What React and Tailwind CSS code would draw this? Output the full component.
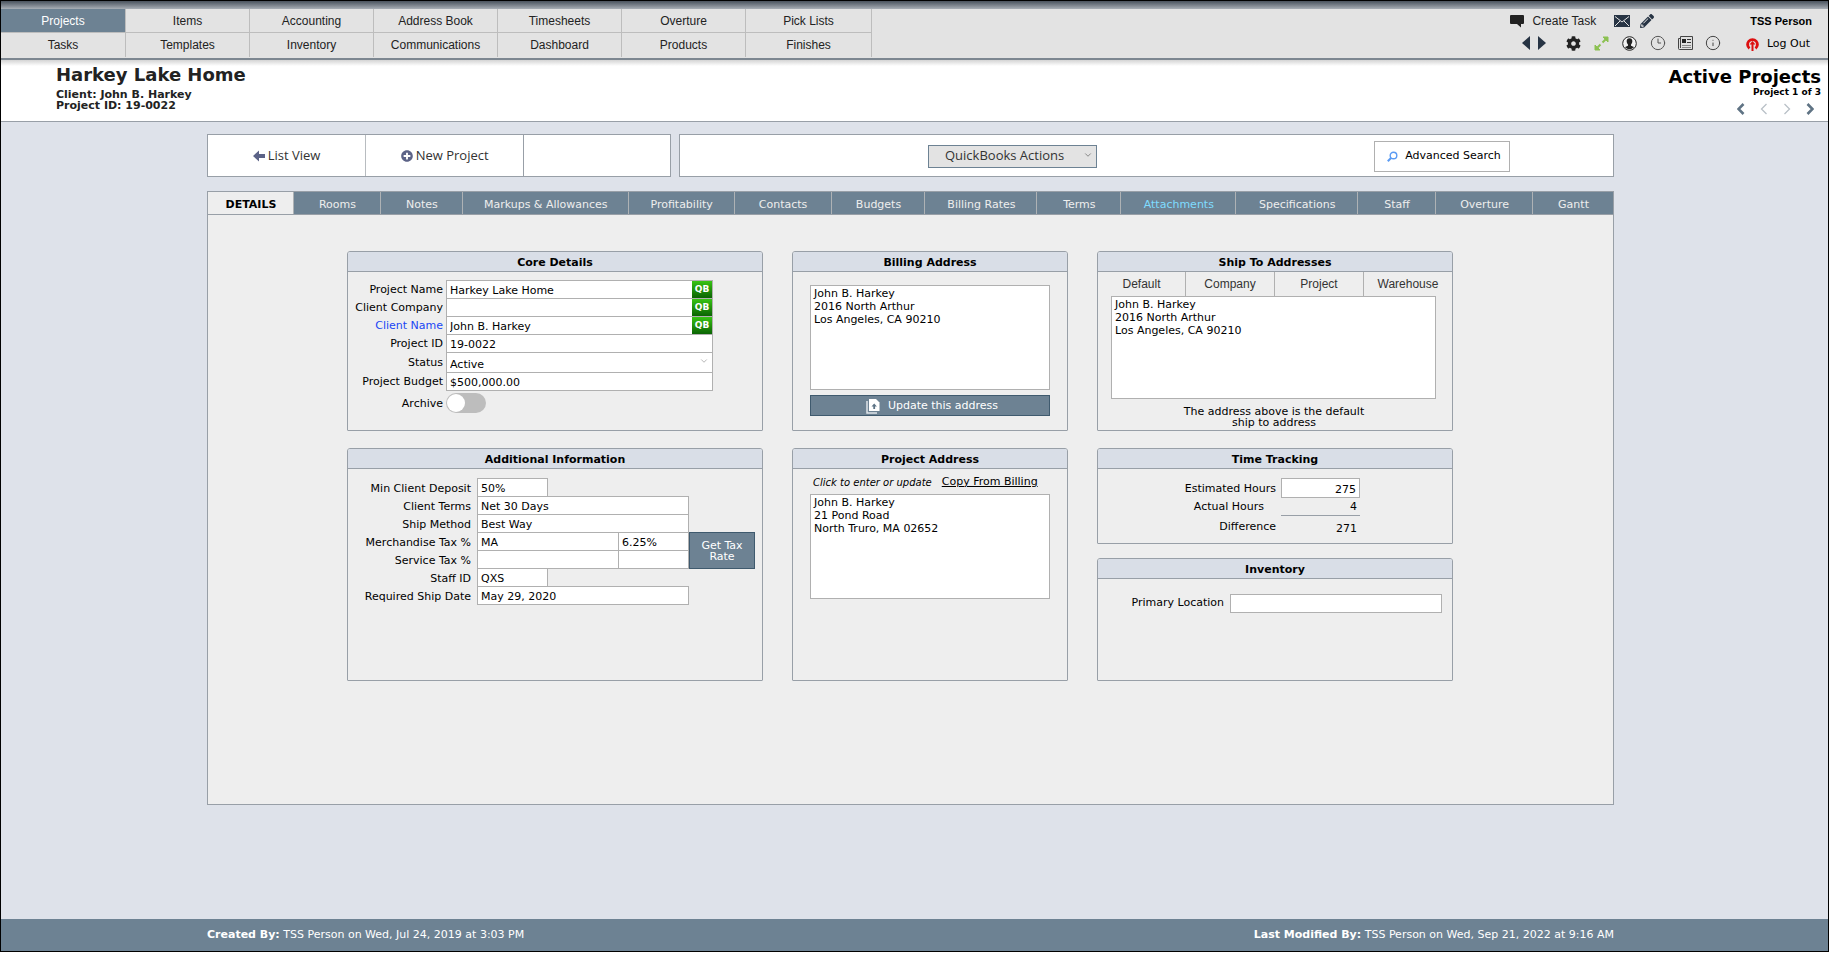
import { ChevronDown, Clock3, Info } from 'lucide-react';
import React, { useState } from 'react';
import { FaCog, FaPencilAlt, FaPlusCircle } from 'react-icons/fa';

const NAV_ROWS = [
  ['Projects', 'Items', 'Accounting', 'Address Book', 'Timesheets', 'Overture', 'Pick Lists'],
  ['Tasks', 'Templates', 'Inventory', 'Communications', 'Dashboard', 'Products', 'Finishes'],
];

const TABS = [
  'DETAILS',
  'Rooms',
  'Notes',
  'Markups & Allowances',
  'Profitability',
  'Contacts',
  'Budgets',
  'Billing Rates',
  'Terms',
  'Attachments',
  'Specifications',
  'Staff',
  'Overture',
  'Gantt',
];

const BILLING = 'John B. Harkey\n2016 North Arthur\nLos Angeles, CA 90210';
const PROJECT = 'John B. Harkey\n21 Pond Road\nNorth Truro, MA 02652';

const inputClass = 'h-[19px] min-w-0 border border-[#b0b0b0] bg-white px-[3px] pt-px text-[11px] outline-none';

function SpeechIcon() {
  return (
    <svg width="14" height="14" viewBox="0 0 14 14" fill="#222">
      <path d="M1 1h12q1 0 1 1v7q0 1-1 1h-2v3.500L7 10H1q-1 0-1-1V2q0-1 1-1z" />
    </svg>
  );
}

function MailIcon() {
  return (
    <svg width="16" height="12" viewBox="0 0 16 12">
      <rect width="16" height="12" fill="#273444" />
      <path d="M1 1.500l7 5.500 7-5.500M1 11l5-5M15 11l-5-5" fill="none" stroke="#e3e3e3" />
    </svg>
  );
}

function TriangleIcon({ right }) {
  return (
    <svg width="8" height="14" viewBox="0 0 8 14" fill="#273444">
      <path d={right ? 'M0 0v14l8-7z' : 'M8 0v14L0 7z'} />
    </svg>
  );
}

function ExpandIcon() {
  return (
    <svg width="15" height="15" viewBox="0 0 15 15" fill="none" stroke="#8cc152" strokeWidth="2">
      <path d="M9 1h5v5z" fill="#8cc152" strokeWidth="1" />
      <path d="M1 9v5h5z" fill="#8cc152" strokeWidth="1" />
      <path d="M12 3L8.500 6.500M3 12l3.500-3.500" />
    </svg>
  );
}

function PersonIcon() {
  return (
    <svg width="15" height="15" viewBox="0 0 15 15">
      <circle cx="7.500" cy="7.500" r="6.800" fill="#f2f2f2" stroke="#222" />
      <path
        d="M7.500 2.200c-2 0-3 1.400-2.800 3.300.1 1.400.7 2.300 1.300 3v1.200c-1 .5-2.300.8-3 1.600a6.400 6.400 0 0 0 9 0c-.7-.8-2-1.100-3-1.600V8.500c.6-.7 1.200-1.600 1.300-3 .2-1.900-.8-3.300-2.800-3.300z"
        fill="#222"
      />
    </svg>
  );
}

function NewsIcon() {
  return (
    <svg width="15" height="14" viewBox="0 0 15 14">
      <path d="M2.500.500h12v13h-13q-1 0-1-1v-10h2z" fill="#e0e0e0" stroke="#444" />
      <path d="M2.500 2v10" stroke="#444" />
      <rect x="4" y="3" width="4" height="4" fill="#222" />
      <path d="M9 3.500h4M9 6.500h4" stroke="#333" />
      <path d="M4 9.500h9M4 11.500h9" stroke="#888" />
    </svg>
  );
}

function LogOutIcon() {
  return (
    <svg width="13" height="13" viewBox="0 0 13 13">
      <path d="M3.500 10.300A4.900 4.900 0 1 1 9.500 10.300" fill="none" stroke="#dd1010" strokeWidth="2.800" />
      <path d="M6.500 3L3.500 6.500h2V13h2V6.500h2z" fill="#dd1010" />
    </svg>
  );
}

function SearchIcon() {
  return (
    <svg width="11" height="11" viewBox="0 0 11 11" fill="none" stroke="#5b9bf3">
      <circle cx="6.500" cy="4.500" r="3.300" strokeWidth="1.400" />
      <path d="M4 7L.8 10.200" strokeWidth="2" />
    </svg>
  );
}

function BackArrowIcon() {
  return (
    <svg width="12" height="12" viewBox="0 0 12 12" fill="#5c6387">
      <path d="M6 .5v3.500h6v4H6v3.500L0 6z" />
    </svg>
  );
}

function PagerIcon({ right, light }) {
  return (
    <svg
      width="8"
      height="12"
      viewBox="0 0 8 12"
      fill="none"
      stroke={light ? '#b9c0c7' : '#5f7384'}
      strokeWidth={light ? 1.3 : 2.6}
    >
      <path d={right ? 'M1.500 1l5 5-5 5' : 'M6.500 1l-5 5 5 5'} />
    </svg>
  );
}

function CopyUpIcon() {
  return (
    <svg width="14" height="15" viewBox="0 0 14 15">
      <path d="M1 2v12h10" fill="none" stroke="#dfe5ea" strokeWidth="1.500" />
      <path d="M3 0h7l3.500 3.500V12H3z" fill="#fff" />
      <path d="M8.200 4.500L5.500 7.500h1.800V10h1.800V7.500h1.800z" fill="#5d7385" />
    </svg>
  );
}

function Panel({ title, className = '', children }) {
  return (
    <section className={`flex flex-col rounded-t-[3px] rounded-b-[1px] border border-[#989fa7] ${className}`}>
      <h2 className="h-5 rounded-t-[2px] border-b border-[#989fa7] bg-[#d9dee7] text-center text-[11px] leading-[21px] font-bold">
        {title}
      </h2>
      {children}
    </section>
  );
}

function CoreRow({ id, label, value, qb, link, tall }) {
  return (
    <div className={`flex items-center ${tall ? 'h-5' : 'h-[18px]'}`}>
      <label htmlFor={id} className={`w-[98px] pt-[3px] pr-[3px] text-right ${link ? 'text-[#1a46f5]' : ''}`}>
        {label}
      </label>
      {tall ? (
        <div className="relative flex w-[267px]">
          <select
            id={id}
            defaultValue={value}
            className="h-[21px] w-full appearance-none border border-[#b0b0b0] bg-white px-[3px] pt-1 text-[11px] outline-none"
          >
            <option>{value}</option>
          </select>
          <ChevronDown size={10} className="pointer-events-none absolute top-[4px] right-1 text-[#a8a8a8]" />
        </div>
      ) : (
        <div className="flex h-[19px] w-[267px] border border-[#b0b0b0] bg-white">
          <input id={id} defaultValue={value} className="min-w-0 flex-1 px-[3px] pt-1 text-[11px] outline-none" />
          {qb && (
            <button
              type="button"
              className="w-5 bg-linear-to-b from-[#37c514] to-[#0a6404] text-[9px] leading-[17px] font-bold text-white"
            >
              QB
            </button>
          )}
        </div>
      )}
    </div>
  );
}

function InfoLabel({ htmlFor, children }) {
  return (
    <label htmlFor={htmlFor} className="col-start-1 pr-[6px] text-right leading-[22px]">
      {children}
    </label>
  );
}

function AddressBox({ label, value, className = '' }) {
  return (
    <textarea
      aria-label={label}
      defaultValue={value}
      className={`block resize-none border border-[#b0b0b0] bg-white px-[3px] py-px text-[11px] leading-[13px] outline-none ${className}`}
    />
  );
}

function TopBar() {
  return (
    <header className="border-b-2 border-[#7d8791] bg-[#e3e3e3] font-['Liberation_Sans',sans-serif] text-xs text-[#222]">
      <div className="h-2 bg-linear-to-b from-[#4a535e] to-[#a9afb6]" />
      <div className="flex h-[49px] justify-between">
        <nav className="w-[871px]">
          {NAV_ROWS.map((row, rowIndex) => (
            <div
              key={row[0]}
              className={`grid grid-cols-[125fr_repeat(5,124fr)_126fr] ${rowIndex === 0 ? 'border-b border-[#bdbdbd]' : ''}`}
            >
              {row.map((item) => (
                <a
                  key={item}
                  href="#"
                  className={`border-r border-[#bdbdbd] text-center ${rowIndex === 0 ? 'h-[23px] leading-6' : 'h-6 leading-6'} ${
                    item === 'Projects' ? 'bg-[#6d8293] text-white' : ''
                  }`}
                >
                  {item}
                </a>
              ))}
            </div>
          ))}
        </nav>
        <div className="flex flex-col pr-4">
          <div className="flex h-6 items-center">
            <button type="button" className="flex items-center gap-2">
              <SpeechIcon />
              Create Task
            </button>
            <button type="button" aria-label="Mail" className="ml-[18px]">
              <MailIcon />
            </button>
            <button type="button" aria-label="Edit" className="ml-[10px]">
              <FaPencilAlt size={14} color="#273444" />
            </button>
            <span className="ml-auto pl-[96px] text-[11px] font-bold text-black">TSS Person</span>
          </div>
          <div className="flex h-5 items-center pl-3">
            <button type="button" aria-label="Back">
              <TriangleIcon />
            </button>
            <button type="button" aria-label="Forward" className="ml-2">
              <TriangleIcon right />
            </button>
            <button type="button" aria-label="Settings" className="ml-5">
              <FaCog size={15} color="#222" />
            </button>
            <button type="button" aria-label="Expand" className="ml-[13px]">
              <ExpandIcon />
            </button>
            <button type="button" aria-label="Profile" className="ml-[13px]">
              <PersonIcon />
            </button>
            <button type="button" aria-label="History" className="ml-[13px]">
              <Clock3 size={16} strokeWidth={1.5} color="#555" />
            </button>
            <button type="button" aria-label="News" className="ml-3">
              <NewsIcon />
            </button>
            <button type="button" aria-label="About" className="ml-3">
              <Info size={16} strokeWidth={1.5} color="#444" />
            </button>
            <a
              href="#"
              className="ml-auto flex items-center gap-2 pt-[3px] pr-[2px] font-['DejaVu_Sans',sans-serif] text-[11px] text-black"
            >
              <LogOutIcon />
              Log Out
            </a>
          </div>
        </div>
      </div>
    </header>
  );
}

function TitleBar() {
  return (
    <div className="flex h-[62px] justify-between border-b border-[#989fa7] bg-linear-to-b from-[#d4d4d4] to-white to-[6px] pr-[7px] pl-[55px] font-bold">
      <div className="pt-1 text-[#222]">
        <h1 className="text-lg leading-[21px]">Harkey Lake Home</h1>
        <p className="mt-1 text-[11px] leading-[11px]">Client: John B. Harkey</p>
        <p className="text-[11px] leading-[11px]">Project ID: 19-0022</p>
      </div>
      <div className="flex flex-col items-end pt-[7px]">
        <div className="text-lg leading-[20px]">Active Projects</div>
        <div className="text-[9px] leading-[10px]">Project 1 of 3</div>
        <div className="mt-[6px] flex items-center gap-[15px] pr-[7px]">
          <button type="button" aria-label="First"><PagerIcon /></button>
          <button type="button" aria-label="Previous"><PagerIcon light /></button>
          <button type="button" aria-label="Next"><PagerIcon right light /></button>
          <button type="button" aria-label="Last"><PagerIcon right /></button>
        </div>
      </div>
    </div>
  );
}

function ActionBar() {
  return (
    <div className="grid grid-cols-[464fr_934fr] gap-2">
      <div className="grid h-[43px] grid-cols-[158fr_158fr_146fr] border border-[#989fa7] bg-white font-['Open_Sans',sans-serif] text-[13px] text-[#333]">
        <button type="button" className="flex items-center justify-center gap-[3px] border-r border-[#b8bcc0] pt-px">
          <BackArrowIcon />
          List View
        </button>
        <button type="button" className="flex items-center justify-center gap-[3px] border-r border-[#989fa7] pt-px">
          <FaPlusCircle size={12} color="#5c6387" />
          New Project
        </button>
      </div>
      <div className="flex h-[43px] items-center justify-end border border-[#989fa7] bg-white pt-px pr-[103px]">
        <div className="relative mr-[277px] flex">
          <select
            aria-label="QuickBooks Actions"
            className="h-[23px] w-[169px] appearance-none border border-[#6d8293] bg-[#e3e3e3] pl-4 font-['Open_Sans',sans-serif] text-[13px] text-[#333] outline-none"
          >
            <option>QuickBooks Actions</option>
          </select>
          <ChevronDown size={10} className="pointer-events-none absolute top-[5px] right-1 text-[#777]" />
        </div>
        <button
          type="button"
          className="flex h-[31px] w-[136px] items-center justify-center gap-[7px] border border-[#b0b0b0] pt-px pl-1 text-[11px]"
        >
          <SearchIcon />
          Advanced Search
        </button>
      </div>
    </div>
  );
}

function TabStrip() {
  return (
    <nav className="grid h-[23px] grid-cols-[86fr_87fr_82fr_166fr_106fr_97fr_94fr_112fr_84fr_115fr_122fr_78fr_97fr_80fr] border-b border-[#989fa7]">
      {TABS.map((tab, index) => (
        <a
          key={tab}
          href="#"
          className={`h-[22px] pl-px text-center text-[11px] leading-[25px] whitespace-nowrap ${index < TABS.length - 1 ? 'border-r border-[#aeb2b5]' : ''} ${
            index === 0 ? 'bg-[#eee] font-bold text-black' : 'bg-[#6d8293]'
          } ${tab === 'Attachments' ? 'text-[#7fdcff]' : index > 0 ? 'text-[#eee]' : ''}`}
        >
          {tab}
        </a>
      ))}
    </nav>
  );
}

function CoreDetails() {
  const [archived, setArchived] = useState(false);

  return (
    <Panel title="Core Details">
      <div className="pt-2">
        <CoreRow id="project-name" label="Project Name" value="Harkey Lake Home" qb />
        <CoreRow id="client-company" label="Client Company" value="" qb />
        <CoreRow id="client-name" label="Client Name" value="John B. Harkey" qb link />
        <CoreRow id="project-id" label="Project ID" value="19-0022" />
        <CoreRow id="status" label="Status" value="Active" tall />
        <CoreRow id="budget" label="Project Budget" value="$500,000.00" />
        <div className="mt-[3px] flex h-5 items-center">
          <label htmlFor="archive" className="w-[98px] pt-[3px] pr-[3px] text-right">Archive</label>
          <input
            id="archive"
            type="checkbox"
            checked={archived}
            onChange={(event) => setArchived(event.target.checked)}
            className="h-5 w-10 appearance-none rounded-full bg-[#bdbdbd] p-px before:block before:size-[18px] before:rounded-full before:bg-white checked:before:ml-5"
          />
        </div>
      </div>
    </Panel>
  );
}

function AdditionalInformation() {
  return (
    <Panel title="Additional Information">
      <div className="grid auto-rows-[18px] grid-cols-[129px_212px_66px] pt-[9px]">
        <InfoLabel htmlFor="deposit">Min Client Deposit</InfoLabel>
        <input id="deposit" defaultValue="50%" className={`w-[71px] ${inputClass}`} />
        <InfoLabel htmlFor="terms">Client Terms</InfoLabel>
        <input id="terms" defaultValue="Net 30 Days" className={`w-[212px] ${inputClass}`} />
        <InfoLabel htmlFor="ship-method">Ship Method</InfoLabel>
        <input id="ship-method" defaultValue="Best Way" className={`w-[212px] ${inputClass}`} />
        <InfoLabel htmlFor="merch-tax">Merchandise Tax %</InfoLabel>
        <div className="flex">
          <input id="merch-tax" defaultValue="MA" className={`w-[142px] ${inputClass}`} />
          <input aria-label="Merchandise tax rate" defaultValue="6.25%" className={`-ml-px w-[71px] ${inputClass}`} />
        </div>
        <button
          type="button"
          className="col-start-3 row-span-2 row-start-4 h-[37px] border border-[#3f5a6e] bg-[#6d8293] pt-px text-[11px] leading-[11px] text-white"
        >
          Get Tax
          <br />
          Rate
        </button>
        <InfoLabel htmlFor="service-tax">Service Tax %</InfoLabel>
        <div className="flex">
          <input id="service-tax" className={`w-[142px] ${inputClass}`} />
          <input aria-label="Service tax rate" className={`-ml-px w-[71px] ${inputClass}`} />
        </div>
        <InfoLabel htmlFor="staff-id">Staff ID</InfoLabel>
        <input id="staff-id" defaultValue="QXS" className={`w-[71px] ${inputClass}`} />
        <InfoLabel htmlFor="ship-date">Required Ship Date</InfoLabel>
        <input id="ship-date" defaultValue="May 29, 2020" className={`w-[212px] ${inputClass}`} />
      </div>
    </Panel>
  );
}

function ShipToAddresses() {
  return (
    <Panel title="Ship To Addresses">
      <div className="grid h-6 grid-cols-[88fr_89fr_89fr_88fr] font-['Liberation_Sans',sans-serif] text-xs text-[#333]">
        {['Default', 'Company', 'Project', 'Warehouse'].map((name) => (
          <button key={name} type="button" className="border-r border-[#b0b0b0] last:border-r-0">
            {name}
          </button>
        ))}
      </div>
      <AddressBox label="Ship to address" value={BILLING} className="mr-4 ml-[13px] h-[103px]" />
      <p className="mt-[7px] pr-[2px] text-center leading-[11px]">
        The address above is the default
        <br />
        ship to address
      </p>
    </Panel>
  );
}

function TimeTracking() {
  return (
    <Panel title="Time Tracking" className="h-24">
      <div className="grid grid-cols-[178px_79px] gap-x-[5px] pt-[9px]">
        <label htmlFor="estimated" className="pt-px text-right leading-[19px]">Estimated Hours</label>
        <input
          id="estimated"
          defaultValue="275"
          className="h-5 border border-[#b0b0b0] bg-white px-[3px] pt-[3px] text-right text-[11px] outline-none"
        />
        <span className="pr-3 text-right leading-[17px]">Actual Hours</span>
        <span className="h-[18px] border-b border-[#989fa7] pr-[3px] text-right leading-[17px]">4</span>
        <span className="text-right leading-[21px]">Difference</span>
        <span className="pr-[3px] text-right leading-[25px]">271</span>
      </div>
    </Panel>
  );
}

export default function App() {
  return (
    <div className="min-h-screen bg-white pr-[2px] pb-[2px] font-['DejaVu_Sans',sans-serif] text-[11px] text-black">
      <div className="flex min-h-[calc(100vh-2px)] flex-col border border-black bg-[#dee2ea]">
        <TopBar />
        <TitleBar />
        <main className="mr-[214px] ml-[206px] flex flex-col gap-[14px] pt-3">
          <ActionBar />
          <div className="border border-[#989fa7] bg-[#eee]">
            <TabStrip />
            <div className="grid min-h-[589px] grid-cols-[416fr_276fr_356fr] grid-rows-[180px_233px] content-start gap-x-[29px] gap-y-[17px] pt-9 pr-[160px] pl-[139px]">
              <CoreDetails />
              <Panel title="Billing Address">
                <div className="px-[17px] pt-[13px]">
                  <AddressBox label="Billing address" value={BILLING} className="h-[105px] w-full" />
                  <button
                    type="button"
                    className="mt-[5px] flex h-[21px] w-full items-center justify-center gap-2 border border-[#3f5a6e] bg-[#6d8293] pt-px pl-1 text-[11px] text-white"
                  >
                    <CopyUpIcon />
                    Update this address
                  </button>
                </div>
              </Panel>
              <ShipToAddresses />
              <AdditionalInformation />
              <Panel title="Project Address">
                <div className="px-[17px]">
                  <div className="flex h-[25px] items-center gap-[10px] pt-px pl-[3px] whitespace-nowrap">
                    <span className="text-[10px] italic">Click to enter or update</span>
                    <a href="#" className="underline">Copy From Billing</a>
                  </div>
                  <AddressBox label="Project address" value={PROJECT} className="h-[105px] w-full" />
                </div>
              </Panel>
              <div className="flex flex-col gap-[14px]">
                <TimeTracking />
                <Panel title="Inventory" className="flex-1">
                  <div className="flex items-center gap-[6px] pt-[15px] pr-[10px]">
                    <label htmlFor="location" className="flex-1 text-right">Primary Location</label>
                    <input id="location" className={`w-[212px] ${inputClass}`} />
                  </div>
                </Panel>
              </div>
            </div>
          </div>
        </main>
        <footer className="mt-auto flex h-8 items-center justify-between bg-[#6d8293] pr-[214px] pl-[206px] text-[11px] text-white">
          <span><b>Created By:</b> TSS Person on Wed, Jul 24, 2019 at 3:03 PM</span>
          <span><b>Last Modified By:</b> TSS Person on Wed, Sep 21, 2022 at 9:16 AM</span>
        </footer>
      </div>
    </div>
  );
}
